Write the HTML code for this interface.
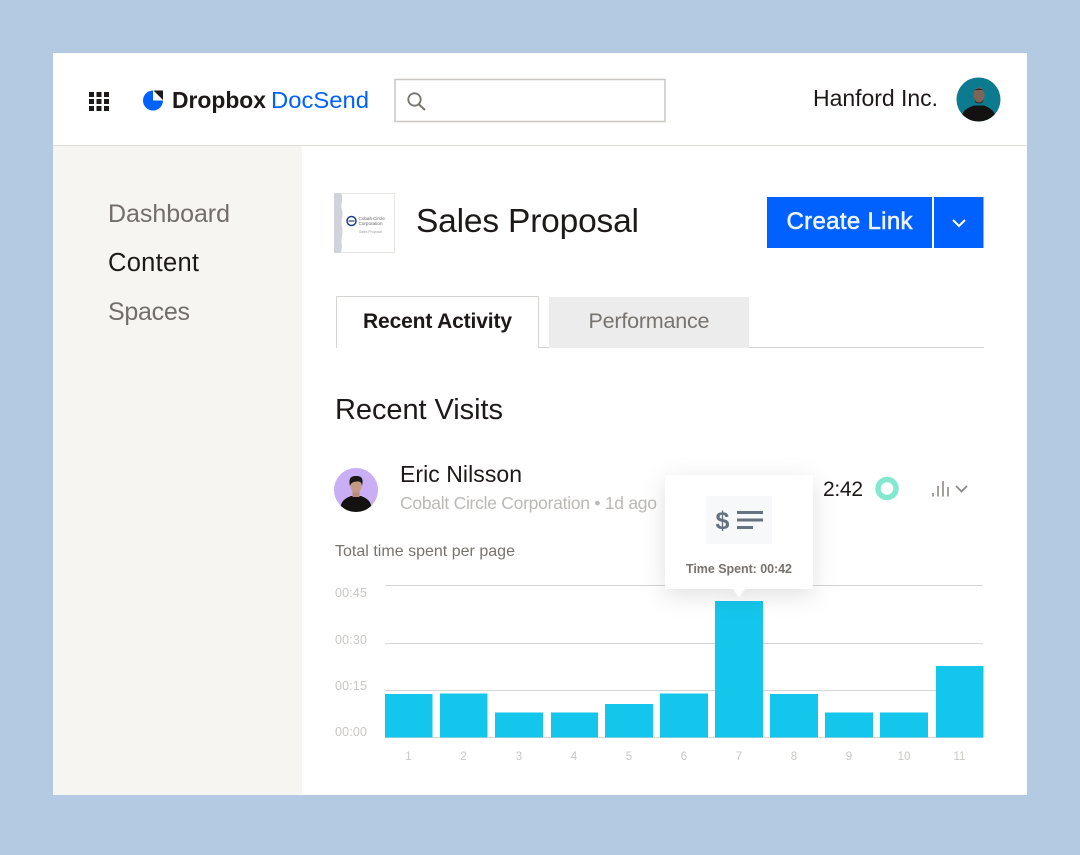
<!DOCTYPE html>
<html lang="en">
<head>
<meta charset="utf-8">
<title>Dropbox DocSend</title>
<style>
html,body{margin:0;padding:0;width:1080px;height:855px;overflow:hidden;background:#b4c9e2}
svg{display:block}
text{font-family:"Liberation Sans",sans-serif;fill:#1e1919}
.ax{font-size:12.500px;fill:#c9c7c4}
.xl{font-size:11.500px;fill:#c9c7c4;text-anchor:middle}
</style>
</head>
<body>
<svg width="1080" height="855" viewBox="0 0 1080 855" xmlns="http://www.w3.org/2000/svg">
<defs>
<filter id="sh" x="-40%" y="-40%" width="180%" height="190%"><feDropShadow dx="0" dy="6" stdDeviation="12" flood-color="#000" flood-opacity=".12"/></filter>
<clipPath id="c1"><circle cx="978.500" cy="99.500" r="22"/></clipPath>
<clipPath id="c2"><circle cx="356" cy="490" r="22"/></clipPath>
</defs>
<rect width="1080" height="855" fill="#b4c9e2"/>
<rect x="53" y="53" width="974" height="742" fill="#fff"/>
<rect x="53" y="146" width="249" height="649" fill="#f7f5f2"/>
<rect x="53" y="145" width="974" height="1" fill="#dfdcd8"/>

<!-- grid icon -->
<g fill="#1e1919">
<rect x="89" y="92" width="5" height="5"/><rect x="96.500" y="92" width="5" height="5"/><rect x="104" y="92" width="5" height="5"/>
<rect x="89" y="99" width="5" height="5"/><rect x="96.500" y="99" width="5" height="5"/><rect x="104" y="99" width="5" height="5"/>
<rect x="89" y="106" width="5" height="5"/><rect x="96.500" y="106" width="5" height="5"/><rect x="104" y="106" width="5" height="5"/>
</g>
<!-- logo -->
<path d="M153 90.500A10 10 0 1 0 163 100.500H153Z" fill="#0061fe"/>
<path d="M153.500 90.500H163V100L153.500 90.500Z" fill="#1e1919"/>
<text x="172" y="108" font-size="23" font-weight="700" textLength="94" lengthAdjust="spacingAndGlyphs">Dropbox</text>
<text x="271" y="108" font-size="23" style="fill:#0061fe" textLength="98" lengthAdjust="spacingAndGlyphs">DocSend</text>

<!-- search -->
<rect x="395" y="79.500" width="270" height="42" fill="#fff" stroke="#c9c7c4" stroke-width="1.500"/>
<circle cx="414.500" cy="99.500" r="6.200" fill="none" stroke="#77736f" stroke-width="1.800"/>
<path d="M419 104.500L425 110" stroke="#77736f" stroke-width="2" fill="none"/>

<text x="813" y="106" font-size="23" textLength="125" lengthAdjust="spacing">Hanford Inc.</text>
<!-- header avatar -->
<circle cx="978.500" cy="99.500" r="22" fill="#0d7b8f"/>
<g clip-path="url(#c1)">
<path d="M961 122C961 111 966 108.500 974 105.500H984C991 108.500 996 111 996 122Z" fill="#131211"/>
<ellipse cx="979" cy="95" rx="5.500" ry="7.500" fill="#7d6558"/>
<path d="M973.500 92C974 87.500 984 87.500 984.500 92L983.500 90H974.500Z" fill="#2d2521"/>
<path d="M974.500 99C976 103.500 982 103.500 983.500 99L983 102C981 104 977 104 975 102Z" fill="#3a2f2a"/>
</g>

<!-- sidebar -->
<text x="108" y="222" font-size="25" style="fill:#736e69" textLength="122" lengthAdjust="spacing">Dashboard</text>
<text x="108" y="271" font-size="25.500" textLength="91" lengthAdjust="spacing">Content</text>
<text x="108" y="320" font-size="25" style="fill:#736e69" textLength="82" lengthAdjust="spacing">Spaces</text>

<!-- thumbnail -->
<rect x="334.500" y="193.500" width="60" height="59" fill="#fff" stroke="#e8e6e3"/>
<path d="M334 193H341C344 199 340 204 342 210C344 216 340 221 342 227C344 233 340 240 342 246L341 253H334Z" fill="#d0d3d9"/>
<circle cx="351.500" cy="221" r="4.500" fill="none" stroke="#1d3f86" stroke-width="1.500"/>
<path d="M348.500 221H354.500" stroke="#1d3f86" stroke-width="1.200"/>
<text x="358.500" y="220" font-size="4.600" style="fill:#666">Cobalt Circle</text>
<text x="358.500" y="225" font-size="4.600" style="fill:#666">Corporation</text>
<text x="359" y="233" font-size="3.400" style="fill:#999">Sales Proposal</text>

<text x="416" y="232" font-size="33.500" textLength="223" lengthAdjust="spacing">Sales Proposal</text>

<!-- button -->
<rect x="767" y="197" width="165" height="51" fill="#0061fe"/>
<rect x="934" y="197" width="49.500" height="51" fill="#0061fe"/>
<text x="786.500" y="229" font-size="24" style="fill:#eef4ff;stroke:#eef4ff;stroke-width:.55" textLength="126" lengthAdjust="spacing">Create Link</text>
<path d="M953 220L959 226L965 220" fill="none" stroke="#fff" stroke-width="2"/>

<!-- tabs -->
<rect x="336" y="347" width="648" height="1" fill="#d6d4d1"/>
<rect x="549" y="297" width="200" height="51" fill="#ececec"/>
<path d="M336.500 347V296.500H538.500V348" fill="#fff" stroke="#d6d4d1"/>
<rect x="337" y="345" width="201" height="3" fill="#fff"/>
<text x="363" y="328" font-size="21" font-weight="700" textLength="149" lengthAdjust="spacing">Recent Activity</text>
<text x="588.500" y="328" font-size="21.500" style="fill:#77736f" textLength="121" lengthAdjust="spacing">Performance</text>

<text x="335" y="419" font-size="29" textLength="168" lengthAdjust="spacing">Recent Visits</text>

<!-- visitor -->
<circle cx="356" cy="490" r="22" fill="#c9aef5"/>
<g clip-path="url(#c2)">
<path d="M340 512C340 501 345 498.500 351 496H361C367 498.500 372 501 372 512Z" fill="#131211"/>
<rect x="352.500" y="491" width="7" height="6" fill="#b98d74"/>
<ellipse cx="356" cy="486" rx="5.500" ry="7" fill="#c49a82"/>
<path d="M350 486C348 477 352 476 356.500 476C361 476 364 478 362 486C361.500 482.500 360.500 481.500 358 481.500C355 481.500 351.500 481.500 350 486Z" fill="#1b1715"/>
</g>
<text x="400" y="482" font-size="23" textLength="122" lengthAdjust="spacing">Eric Nilsson</text>
<text x="400" y="509" font-size="17.500" style="fill:#bbb9b6" textLength="257" lengthAdjust="spacing">Cobalt Circle Corporation • 1d ago</text>
<text x="335" y="556" font-size="16" style="fill:#77736f" textLength="180" lengthAdjust="spacing">Total time spent per page</text>

<text x="823" y="496" font-size="21" textLength="40" lengthAdjust="spacing">2:42</text>
<circle cx="887" cy="488.500" r="9" fill="none" stroke="#82e8ce" stroke-width="5.500"/>
<g fill="#a3a09d">
<rect x="932" y="493" width="2" height="3.500"/><rect x="937" y="486" width="2" height="10.500"/><rect x="942" y="481" width="2" height="15.500"/><rect x="947" y="487" width="2" height="9.500"/>
</g>
<path d="M956 486L961.500 491.500L967 486" fill="none" stroke="#8c8986" stroke-width="1.800"/>

<!-- chart -->
<g fill="#d6d4d1">
<rect x="385" y="585" width="598" height="1"/>
<rect x="385" y="643" width="598" height="1"/>
<rect x="385" y="690" width="598" height="1"/>
<rect x="385" y="737" width="598" height="1"/>
</g>
<text class="ax" x="335" y="597" textLength="32">00:45</text>
<text class="ax" x="335" y="644" textLength="32">00:30</text>
<text class="ax" x="335" y="690" textLength="32">00:15</text>
<text class="ax" x="335" y="736" textLength="32">00:00</text>
<g fill="#14c6ec">
<rect x="385" y="694" width="47.500" height="43.500"/>
<rect x="440" y="693.500" width="47.500" height="44"/>
<rect x="495" y="712.500" width="48" height="25"/>
<rect x="551" y="712.500" width="47" height="25"/>
<rect x="605" y="704" width="48" height="33.500"/>
<rect x="660" y="693.500" width="48" height="44"/>
<rect x="715" y="601" width="48" height="136.500"/>
<rect x="770" y="694" width="48" height="43.500"/>
<rect x="825" y="712.500" width="48" height="25"/>
<rect x="880" y="712.500" width="48" height="25"/>
<rect x="936" y="666" width="47.500" height="71.500"/>
</g>
<text class="xl" x="408.500" y="760">1</text>
<text class="xl" x="463.500" y="760">2</text>
<text class="xl" x="519" y="760">3</text>
<text class="xl" x="574" y="760">4</text>
<text class="xl" x="629" y="760">5</text>
<text class="xl" x="684" y="760">6</text>
<text class="xl" x="739" y="760">7</text>
<text class="xl" x="794" y="760">8</text>
<text class="xl" x="849" y="760">9</text>
<text class="xl" x="904" y="760">10</text>
<text class="xl" x="959.500" y="760">11</text>

<!-- tooltip -->
<path d="M665 475H813V589H745L739 597L733 589H665Z" fill="#fff" filter="url(#sh)"/>
<rect x="706" y="496" width="66" height="48" fill="#f7f8f9"/>
<text x="715.500" y="529" font-size="25" font-weight="700" style="fill:#667180">$</text>
<g fill="#667180">
<rect x="737" y="511" width="26" height="3"/>
<rect x="737" y="518.500" width="26" height="3"/>
<rect x="737" y="526" width="16" height="3"/>
</g>
<text x="686" y="573" font-size="12.500" font-weight="700" style="fill:#77736f" textLength="106" lengthAdjust="spacing">Time Spent: 00:42</text>
</svg>
</body>
</html>
